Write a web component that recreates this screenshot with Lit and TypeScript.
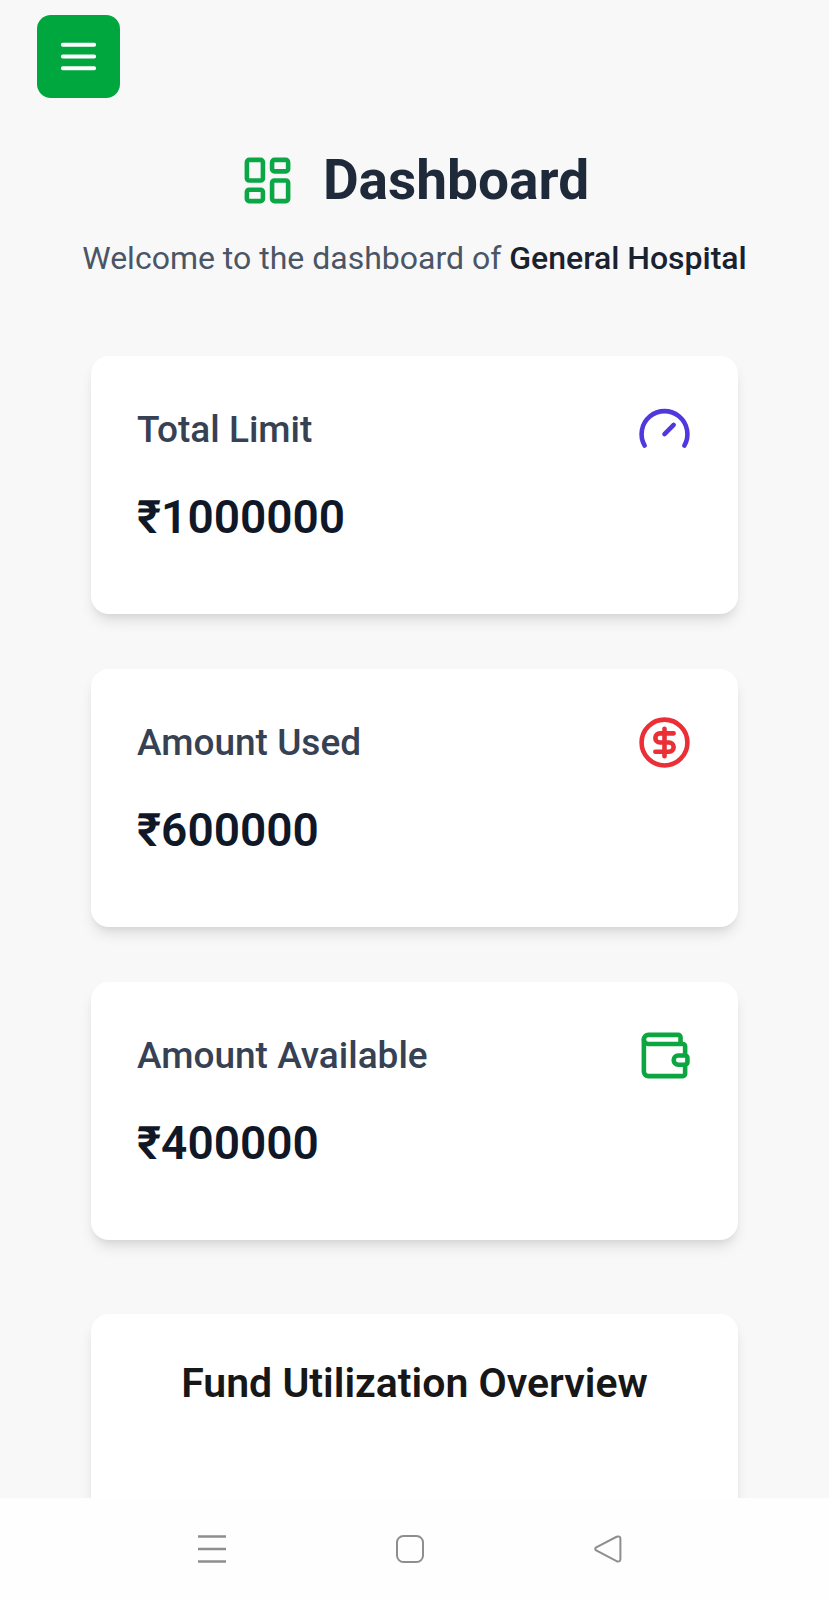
import { LitElement, html, css, svg, SVGTemplateResult } from "lit";
import { customElement, property } from "lit/decorators.js";

const icons: Record<string, SVGTemplateResult> = {
  menu: svg`<path d="M4 6h16M4 12h16M4 18h16"/>`,
  dashboard: svg`<rect x="3" y="3" width="7" height="9" rx="1"/><rect x="14" y="3" width="7" height="5" rx="1"/><rect x="14" y="12" width="7" height="9" rx="1"/><rect x="3" y="16" width="7" height="5" rx="1"/>`,
  gauge: svg`<path d="m12 14 4-4"/><path d="M3.34 19a10 10 0 1 1 17.32 0"/>`,
  dollar: svg`<circle cx="12" cy="12" r="10"/><path d="M16 8h-6a2 2 0 1 0 0 4h4a2 2 0 1 1 0 4H8"/><path d="M12 18V6"/>`,
  wallet: svg`<path d="M19 7V4a1 1 0 0 0-1-1H5a2 2 0 0 0 0 4h15a1 1 0 0 1 1 1v4h-3a2 2 0 0 0 0 4h3a1 1 0 0 0 1-1v-2a1 1 0 0 0-1-1"/><path d="M3 5v14a2 2 0 0 0 2 2h15a1 1 0 0 0 1-1v-4"/>`,
};

const icon = (name: string) => html`<svg
  viewBox="0 0 24 24"
  fill="none"
  stroke="currentColor"
  stroke-width="2"
  stroke-linecap="round"
  stroke-linejoin="round"
  aria-hidden="true"
>${icons[name]}</svg>`;

@customElement("stat-card")
class StatCard extends LitElement {
  @property() label = "";
  @property() amount = "";
  @property() icon = "";

  static styles = css`
    :host {
      display: block;
      box-sizing: border-box;
      padding: 46px 46px 65px;
      border-radius: 18px;
      background: #fff;
      box-shadow: 0 9px 14px -2px rgba(0, 0, 0, 0.1), 0 5px 9px -5px rgba(0, 0, 0, 0.1);
    }
    .row {
      display: flex;
      align-items: center;
      justify-content: space-between;
      margin-bottom: 28px;
    }
    .label {
      margin: 0;
      font-size: 37px;
      line-height: 55px;
      font-weight: 500;
      color: #364153;
    }
    .amount {
      margin: 0;
      font-size: 46px;
      line-height: 64px;
      font-weight: 600;
      color: #101828;
    }
    svg {
      display: block;
      width: 55px;
      height: 55px;
    }
    .gauge { color: #4f39dc; }
    .dollar { color: #ea2f37; }
    .wallet { color: #0ba640; }
  `;

  render() {
    return html`
      <div class="row">
        <h2 class="label">${this.label}</h2>
        <span class=${this.icon}>${icon(this.icon)}</span>
      </div>
      <p class="amount">₹${this.amount}</p>
    `;
  }
}

@customElement("app-root")
class AppRoot extends LitElement {
  static styles = css`
    :host {
      display: flex;
      flex-direction: column;
      height: 100vh;
      font-family: Roboto, "Noto Sans", sans-serif;
      background: #f8f8f8;
    }
    .page {
      flex: 1;
      min-height: 0;
      overflow-y: auto;
      scrollbar-width: none;
      padding: 15px 37px 0;
    }
    button {
      border: 0;
      padding: 0;
      background: none;
      font: inherit;
      cursor: pointer;
    }
    svg {
      display: block;
    }
    .menu {
      padding: 18px;
      border-radius: 14px;
      background: #00a63e;
      color: #fff;
    }
    .menu svg {
      width: 47px;
      height: 47px;
    }
    .heading {
      display: flex;
      align-items: center;
      justify-content: center;
      gap: 28px;
      margin-top: 46px;
    }
    .heading svg {
      width: 55px;
      height: 55px;
      color: #0ba645;
    }
    h1 {
      margin: 0;
      font-size: 55px;
      line-height: 73px;
      font-weight: 700;
      color: #1e2939;
    }
    .welcome {
      margin: 18px 0 0;
      font-size: 32px;
      line-height: 46px;
      text-align: center;
      color: #4a5565;
    }
    .welcome strong {
      font-weight: 500;
      color: #1a2230;
    }
    .cards {
      display: grid;
      gap: 55px;
      padding: 0 54px;
      margin-top: 75px;
    }
    .chart {
      margin: 74px 54px 0;
      padding: 46px 46px 460px;
      border-radius: 18px;
      background: #fff;
      box-shadow: 0 9px 14px -2px rgba(0, 0, 0, 0.1), 0 5px 9px -5px rgba(0, 0, 0, 0.1);
    }
    .chart h2 {
      margin: 0;
      font-size: 41px;
      line-height: 46px;
      font-weight: 600;
      text-align: center;
      color: #171717;
    }
    .system {
      display: grid;
      grid-template-columns: repeat(3, 1fr);
      height: 102px;
      padding: 0 122px 0 113px;
      background: #fefefe;
      color: #8e8e8e;
    }
    .system button {
      display: grid;
      place-items: center;
      color: inherit;
    }
    .system svg {
      width: 28px;
      height: 28px;
    }
  `;

  private stats = [
    { label: "Total Limit", amount: "1000000", icon: "gauge" },
    { label: "Amount Used", amount: "600000", icon: "dollar" },
    { label: "Amount Available", amount: "400000", icon: "wallet" },
  ];

  render() {
    return html`
      <main class="page">
        <button class="menu" aria-label="Open menu">${icon("menu")}</button>
        <header>
          <div class="heading">${icon("dashboard")}<h1>Dashboard</h1></div>
          <p class="welcome">Welcome to the dashboard of <strong>General Hospital</strong></p>
        </header>
        <section class="cards">
          ${this.stats.map(
            (s) => html`<stat-card .label=${s.label} .amount=${s.amount} .icon=${s.icon}></stat-card>`
          )}
        </section>
        <section class="chart"><h2>Fund Utilization Overview</h2></section>
      </main>
      <nav class="system">
        <button aria-label="Recent apps">
          <svg viewBox="0 0 28 28" fill="none" stroke="currentColor" stroke-width="2.4"><path d="M0 1.5h28M0 14h28M0 26.5h28"/></svg>
        </button>
        <button aria-label="Home">
          <svg viewBox="0 0 28 28" fill="none" stroke="currentColor" stroke-width="2"><rect x="1" y="1" width="26" height="26" rx="6.5"/></svg>
        </button>
        <button aria-label="Back">
          <svg viewBox="0 0 28 28" fill="none" stroke="currentColor" stroke-width="2"><path d="M2.2 12.4 22.6 1.8Q26.3 .6 26.4 3.6V24Q26.3 27.4 22.6 26.2L2.2 15.4Q.2 13.9 2.2 12.4Z"/></svg>
        </button>
      </nav>
    `;
  }
}
